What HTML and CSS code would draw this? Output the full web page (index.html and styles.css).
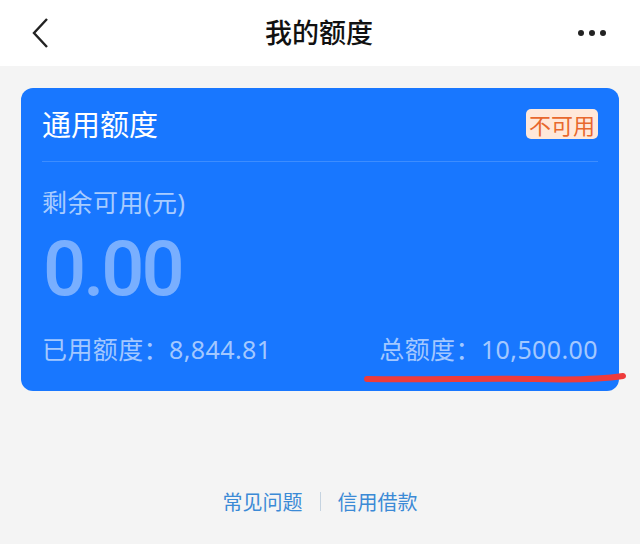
FILE: index.html
```html
<!doctype html>
<html lang="zh-CN">
<head>
  <meta charset="UTF-8">
  <meta name="viewport" content="width=device-width, initial-scale=1.0">
  <title>我的额度</title>
  <link rel="stylesheet" href="styles.css">
</head>
<body>
  <header class="nav">
    <span class="nav-back">
      <svg width="18" height="32" viewBox="0 0 18 32"><path d="M15 2 L2 16 L15 30" fill="none" stroke="#222" stroke-width="2.4" stroke-linejoin="miter"/></svg>
    </span>
    <h1 class="nav-title">我的额度</h1>
    <span class="nav-more"><i></i><i></i><i></i></span>
  </header>

  <main class="page">
    <section class="card">
      <div class="card-head">
        <span class="card-title">通用额度</span>
        <span class="badge">不可用</span>
      </div>
      <div class="card-label">剩余可用(元)</div>
      <div class="card-amount">0.00</div>
      <div class="card-foot">
        <span>已用额度：8,844.81</span>
        <span class="total">总额度：10,500.00</span>
      </div>
      <svg class="mark" width="264" height="14" viewBox="0 0 264 14"><path d="M3 8 C60 9 120 7 170 8 C210 9 240 8 259 5" fill="none" stroke="#ee3b3b" stroke-width="6" stroke-linecap="round"/></svg>
    </section>

    <nav class="links">
      <a href="#">常见问题</a>
      <span class="sep"></span>
      <a href="#">信用借款</a>
    </nav>
  </main>
</body>
</html>
```

FILE: styles.css
```css
body {
  margin: 0;
  background: #f4f4f4;
  font-family: "Noto Sans CJK SC", "Noto Sans", sans-serif;
  width: 640px;
  height: 544px;
  overflow: hidden;
}
.nav {
  height: 66px;
  background: #fff;
  display: flex;
  align-items: center;
  justify-content: space-between;
  padding: 0 34px 0 32px;
}
.nav-back {
  width: 40px;
  display: flex;
}
.nav-title {
  margin: 0 0 4px;
  font-size: 27px;
  font-weight: 500;
  color: #111;
}
.nav-more {
  width: 40px;
  display: flex;
  justify-content: flex-end;
  gap: 5px;
}
.nav-more i {
  width: 6px;
  height: 6px;
  border-radius: 50%;
  background: #222;
}
.page {
  padding: 22px 21px 0;
}
.card {
  position: relative;
  background: #1877ff;
  border-radius: 12px;
  padding: 0 21px;
  height: 303px;
  box-sizing: border-box;
}
.card-head {
  height: 73px;
  display: flex;
  align-items: center;
  justify-content: space-between;
  border-bottom: 1px solid #3d8dff;
}
.card-title {
  font-size: 29px;
  color: #fff;
  margin-bottom: 3px;
}
.badge {
  font-size: 22px;
  line-height: 30px;
  padding: 0 3px;
  border-radius: 5px;
  background: #ffe8da;
  color: #e8682e;
  margin-bottom: 2px;
}
.card-label {
  margin-top: 23px;
  font-family: "Noto Sans", "Noto Sans CJK SC", sans-serif;
  font-size: 25px;
  line-height: 34px;
  letter-spacing: 0.5px;
  color: #a8ccff;
}
.card-amount {
  font-family: Roboto, sans-serif;
  font-weight: 500;
  font-size: 76px;
  line-height: 80px;
  letter-spacing: -3px;
  color: #79afff;
  margin-top: 10px;
  margin-left: 1px;
}
.card-foot {
  margin-top: 24px;
  display: flex;
  justify-content: space-between;
  font-family: "Noto Sans", "Noto Sans CJK SC", sans-serif;
  font-size: 25px;
  line-height: 32px;
  letter-spacing: 0.4px;
  color: #a3c8ff;
}
.mark {
  position: absolute;
  left: 343px;
  top: 283px;
}
.links {
  margin-top: 96px;
  display: flex;
  justify-content: center;
  align-items: center;
  gap: 17px;
}
.links a {
  font-size: 20px;
  color: #3b8ad6;
  text-decoration: none;
}
.sep {
  width: 1px;
  height: 19px;
  background: #c5d3e0;
}
```
